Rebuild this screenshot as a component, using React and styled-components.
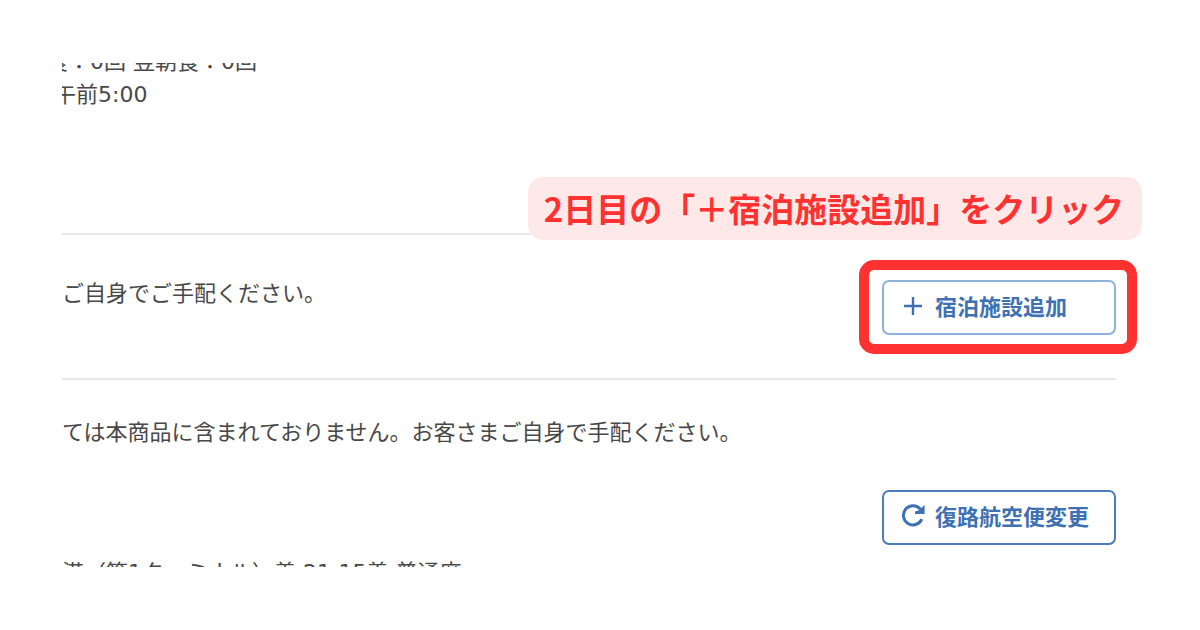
import React from "react";
import styled, { createGlobalStyle } from "styled-components";

const GlobalStyle = createGlobalStyle`
  * { box-sizing: border-box; }
  body {
    margin: 0;
    background: #ffffff;
    color: #484848;
    font-family: "DejaVu Sans", "Noto Sans CJK JP", sans-serif;
    font-size: 22px;
    line-height: 33px;
  }
`;

const Page = styled.main`
  padding: 63px 84px 63px 62px;
`;

const Section = styled.section`
  position: relative;
  padding: ${(p) => p.$padding};
  border-bottom: ${(p) => (p.$last ? "0" : "2px solid #e8e8e8")};
`;

const Clip = styled.div`
  overflow: hidden;
  height: ${(p) => p.$height || "auto"};
`;

const Text = styled.p`
  margin: ${(p) => p.$margin || "0"};
  white-space: nowrap;
`;

const Row = styled.div`
  display: flex;
  justify-content: space-between;
  align-items: flex-start;
`;

const Actions = styled.div`
  display: flex;
  justify-content: flex-end;
  padding: ${(p) => p.$padding};
`;

const Highlighted = styled.div`
  position: relative;
  &::after {
    content: "";
    position: absolute;
    inset: -20px -21px -19px -23px;
    border: 10px solid #ff3131;
    border-radius: 15px;
    pointer-events: none;
  }
`;

const ActionButton = styled.button`
  display: flex;
  align-items: center;
  gap: 10px;
  width: 234px;
  height: 55px;
  padding: 0 17px 5px;
  border: 2px solid ${(p) => p.$border || "#4a7dbb"};
  border-radius: 7px;
  background: #ffffff;
  color: #3d71b3;
  font-family: "Noto Sans CJK JP", sans-serif;
  font-size: 22px;
  font-weight: 700;
  line-height: 33px;
  white-space: nowrap;
  cursor: pointer;
`;

const Icon = styled.svg`
  flex: none;
  width: 24px;
  height: 24px;
`;

const Callout = styled.div`
  position: absolute;
  right: -26px;
  bottom: -7px;
  padding: 7px 15px 7px 13px;
  border-radius: 15px;
  background: #ffe8e8;
  color: #ff3131;
  font-family: "Noto Sans CJK JP", sans-serif;
  font-size: 33px;
  font-weight: 700;
  line-height: 49px;
  min-width: 614px;
  text-align: center;
  white-space: nowrap;
`;

const PlusIcon = () => (
  <Icon viewBox="0 0 24 24" aria-hidden="true">
    <path d="M12 4v18M3 13h18" fill="none" stroke="currentColor" strokeWidth="2.4" />
  </Icon>
);

const ReloadIcon = () => (
  <Icon viewBox="0 0 24 24" aria-hidden="true">
    <path
      d="M19.4 6.2A9.6 9.6 0 1 0 20.8 16.2"
      fill="none"
      stroke="currentColor"
      strokeWidth="3"
    />
    <path d="M23.6 2V11H14V8.6L18 7.2Z" fill="currentColor" />
  </Icon>
);

export default function App() {
  return (
    <>
      <GlobalStyle />
      <Page>
        <Section $padding="0 0 122px">
          <Clip>
            <Text $margin="-18px 0 0 -16px">食：0回 翌朝食：0回</Text>
            <Text $margin="0 0 0 -8px">午前5:00</Text>
          </Clip>
          <Callout>2日目の「＋宿泊施設追加」をクリック</Callout>
        </Section>

        <Section $padding="42px 0 43px">
          <Row>
            <Text>ご自身でご手配ください。</Text>
            <Actions $padding="3px 0 0">
              <Highlighted>
                <ActionButton type="button" $border="#8fb2da">
                  <PlusIcon />
                  宿泊施設追加
                </ActionButton>
              </Highlighted>
            </Actions>
          </Row>
        </Section>

        <Section $padding="36px 0 0" $last>
          <Text>ては本商品に含まれておりません。お客さまご自身で手配ください。</Text>
          <Actions $padding="41px 0 11px">
            <ActionButton type="button">
              <ReloadIcon />
              復路航空便変更
            </ActionButton>
          </Actions>
          <Clip $height="11px">
            <Text>港（第1ターミナル）着 21:15着 普通席</Text>
          </Clip>
        </Section>
      </Page>
    </>
  );
}
